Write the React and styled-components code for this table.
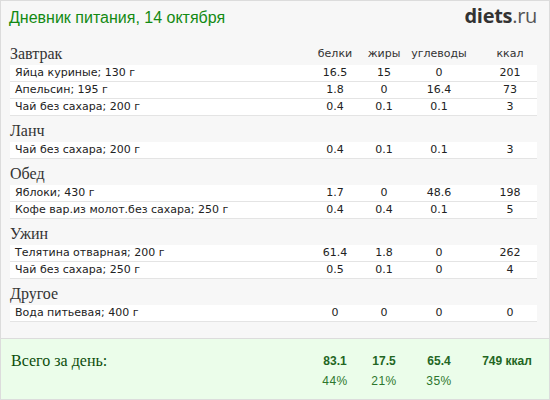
import styled, { createGlobalStyle } from "styled-components";

const sections = [
    {
        title: "Завтрак",
        items: [
            ["Яйца куриные; 130 г", "16.5", "15", "0", "201"],
            ["Апельсин; 195 г", "1.8", "0", "16.4", "73"],
            ["Чай без сахара; 200 г", "0.4", "0.1", "0.1", "3"],
        ],
    },
    {
        title: "Ланч",
        items: [["Чай без сахара; 200 г", "0.4", "0.1", "0.1", "3"]],
    },
    {
        title: "Обед",
        items: [
            ["Яблоки; 430 г", "1.7", "0", "48.6", "198"],
            ["Кофе вар.из молот.без сахара; 250 г", "0.4", "0.4", "0.1", "5"],
        ],
    },
    {
        title: "Ужин",
        items: [
            ["Телятина отварная; 200 г", "61.4", "1.8", "0", "262"],
            ["Чай без сахара; 250 г", "0.5", "0.1", "0", "4"],
        ],
    },
    {
        title: "Другое",
        items: [["Вода питьевая; 400 г", "0", "0", "0", "0"]],
    },
];

const labels = ["белки", "жиры", "углеводы", "ккал"];

const App = () => {
    return (
        <>
            <GlobalStyle />
            <Frame>
                <Header>
                    <Title>Дневник питания, 14 октября</Title>
                    <Logo>
                        <b>diets</b>.ru
                    </Logo>
                </Header>

                <Body>
                    {sections.map((section, si) => (
                        <div key={section.title}>
                            <SectionHead>
                                <SectionTitle>{section.title}</SectionTitle>
                                {si === 0 && labels.map((l, i) => (
                                    <Label key={l} last={i === 3}>{l}</Label>
                                ))}
                            </SectionHead>
                            {section.items.map((item, ii) => (
                                <Row key={ii}>
                                    <Name>{item[0]}</Name>
                                    {item.slice(1).map((v, vi) => (
                                        <Cell key={vi} last={vi === 3}>{v}</Cell>
                                    ))}
                                </Row>
                            ))}
                        </div>
                    ))}
                </Body>

                <Totals>
                    <TotalLabel>Всего за день:</TotalLabel>
                    <TotalValue>83.1</TotalValue>
                    <TotalValue>17.5</TotalValue>
                    <TotalValue>65.4</TotalValue>
                    <TotalValue last>749 ккал</TotalValue>
                    <span />
                    <Percent>44%</Percent>
                    <Percent>21%</Percent>
                    <Percent>35%</Percent>
                    <span />
                </Totals>
            </Frame>
        </>
    );
};

const GlobalStyle = createGlobalStyle`
    body {
        margin: 0;
        background: #fff;
        font-family: "DejaVu Sans", Verdana, sans-serif;
    }
`;

const columns = "1fr 48px 50px 60px 68px";

const Frame = styled.div`
    width: 550px;
    height: 400px;
    box-sizing: border-box;
    border: 1px solid #dcdcdc;
    background: #f7f7f7;
    display: flex;
    flex-direction: column;
`;

const Header = styled.div`
    height: 38px;
    box-sizing: border-box;
    padding: 6px 12px 0 8px;
    display: flex;
    align-items: baseline;
    justify-content: space-between;
`;

const Title = styled.div`
    font-family: "Liberation Sans", Arial, sans-serif;
    font-size: 16px;
    line-height: 18px;
    color: #138a13;
`;

const Logo = styled.div`
    font-family: "Open Sans", "Liberation Sans", sans-serif;
    font-size: 20px;
    line-height: 18px;
    color: #555;
    letter-spacing: -0.3px;

    b {
        font-weight: 700;
        color: #333;
    }
`;

const Body = styled.div`
    flex: 1;
    padding: 0 12px 0 9px;
`;

const SectionHead = styled.div`
    height: 26px;
    box-sizing: border-box;
    display: grid;
    grid-template-columns: ${columns};
    align-items: end;
    padding-bottom: 2px;
`;

const SectionTitle = styled.div`
    font-family: "Liberation Serif", "Times New Roman", serif;
    font-size: 16px;
    line-height: 18px;
    color: #333;
`;

const Label = styled.div`
    font-size: 11px;
    line-height: 16px;
    color: #333;
    text-align: center;
    padding-left: ${props => props.last ? "14px" : "0"};
    margin-bottom: 1px;
`;

const Row = styled.div`
    display: grid;
    grid-template-columns: ${columns};
    height: 16px;
    align-items: center;
    background: #fff;
    border-bottom: 1px solid #e4e4e4;
    font-size: 11px;
    line-height: 16px;
    color: #222;
`;

const Name = styled.div`
    padding-left: 5px;
    white-space: nowrap;
`;

const Cell = styled.div`
    text-align: center;
    padding-left: ${props => props.last ? "14px" : "0"};
`;

const Totals = styled.div`
    height: 61px;
    box-sizing: border-box;
    border-top: 1px solid #dcdcdc;
    background: #ebfdea;
    padding: 14px 12px 0 9px;
    display: grid;
    grid-template-columns: ${columns};
    grid-auto-rows: 16px;
    row-gap: 4px;
    align-items: center;
`;

const TotalLabel = styled.div`
    font-family: "Liberation Serif", "Times New Roman", serif;
    font-size: 16px;
    line-height: 16px;
    color: #0b4d0b;
    padding-left: 1px;
`;

const TotalValue = styled.div`
    font-family: "Liberation Sans", Arial, sans-serif;
    font-size: 12px;
    font-weight: 700;
    color: #236623;
    text-align: center;
    white-space: nowrap;
    padding-left: ${props => props.last ? "8px" : "0"};
`;

const Percent = styled.div`
    font-family: "Liberation Sans", Arial, sans-serif;
    font-size: 12px;
    color: #2d772d;
    text-align: center;
    letter-spacing: 0.5px;
`;

export default App;
